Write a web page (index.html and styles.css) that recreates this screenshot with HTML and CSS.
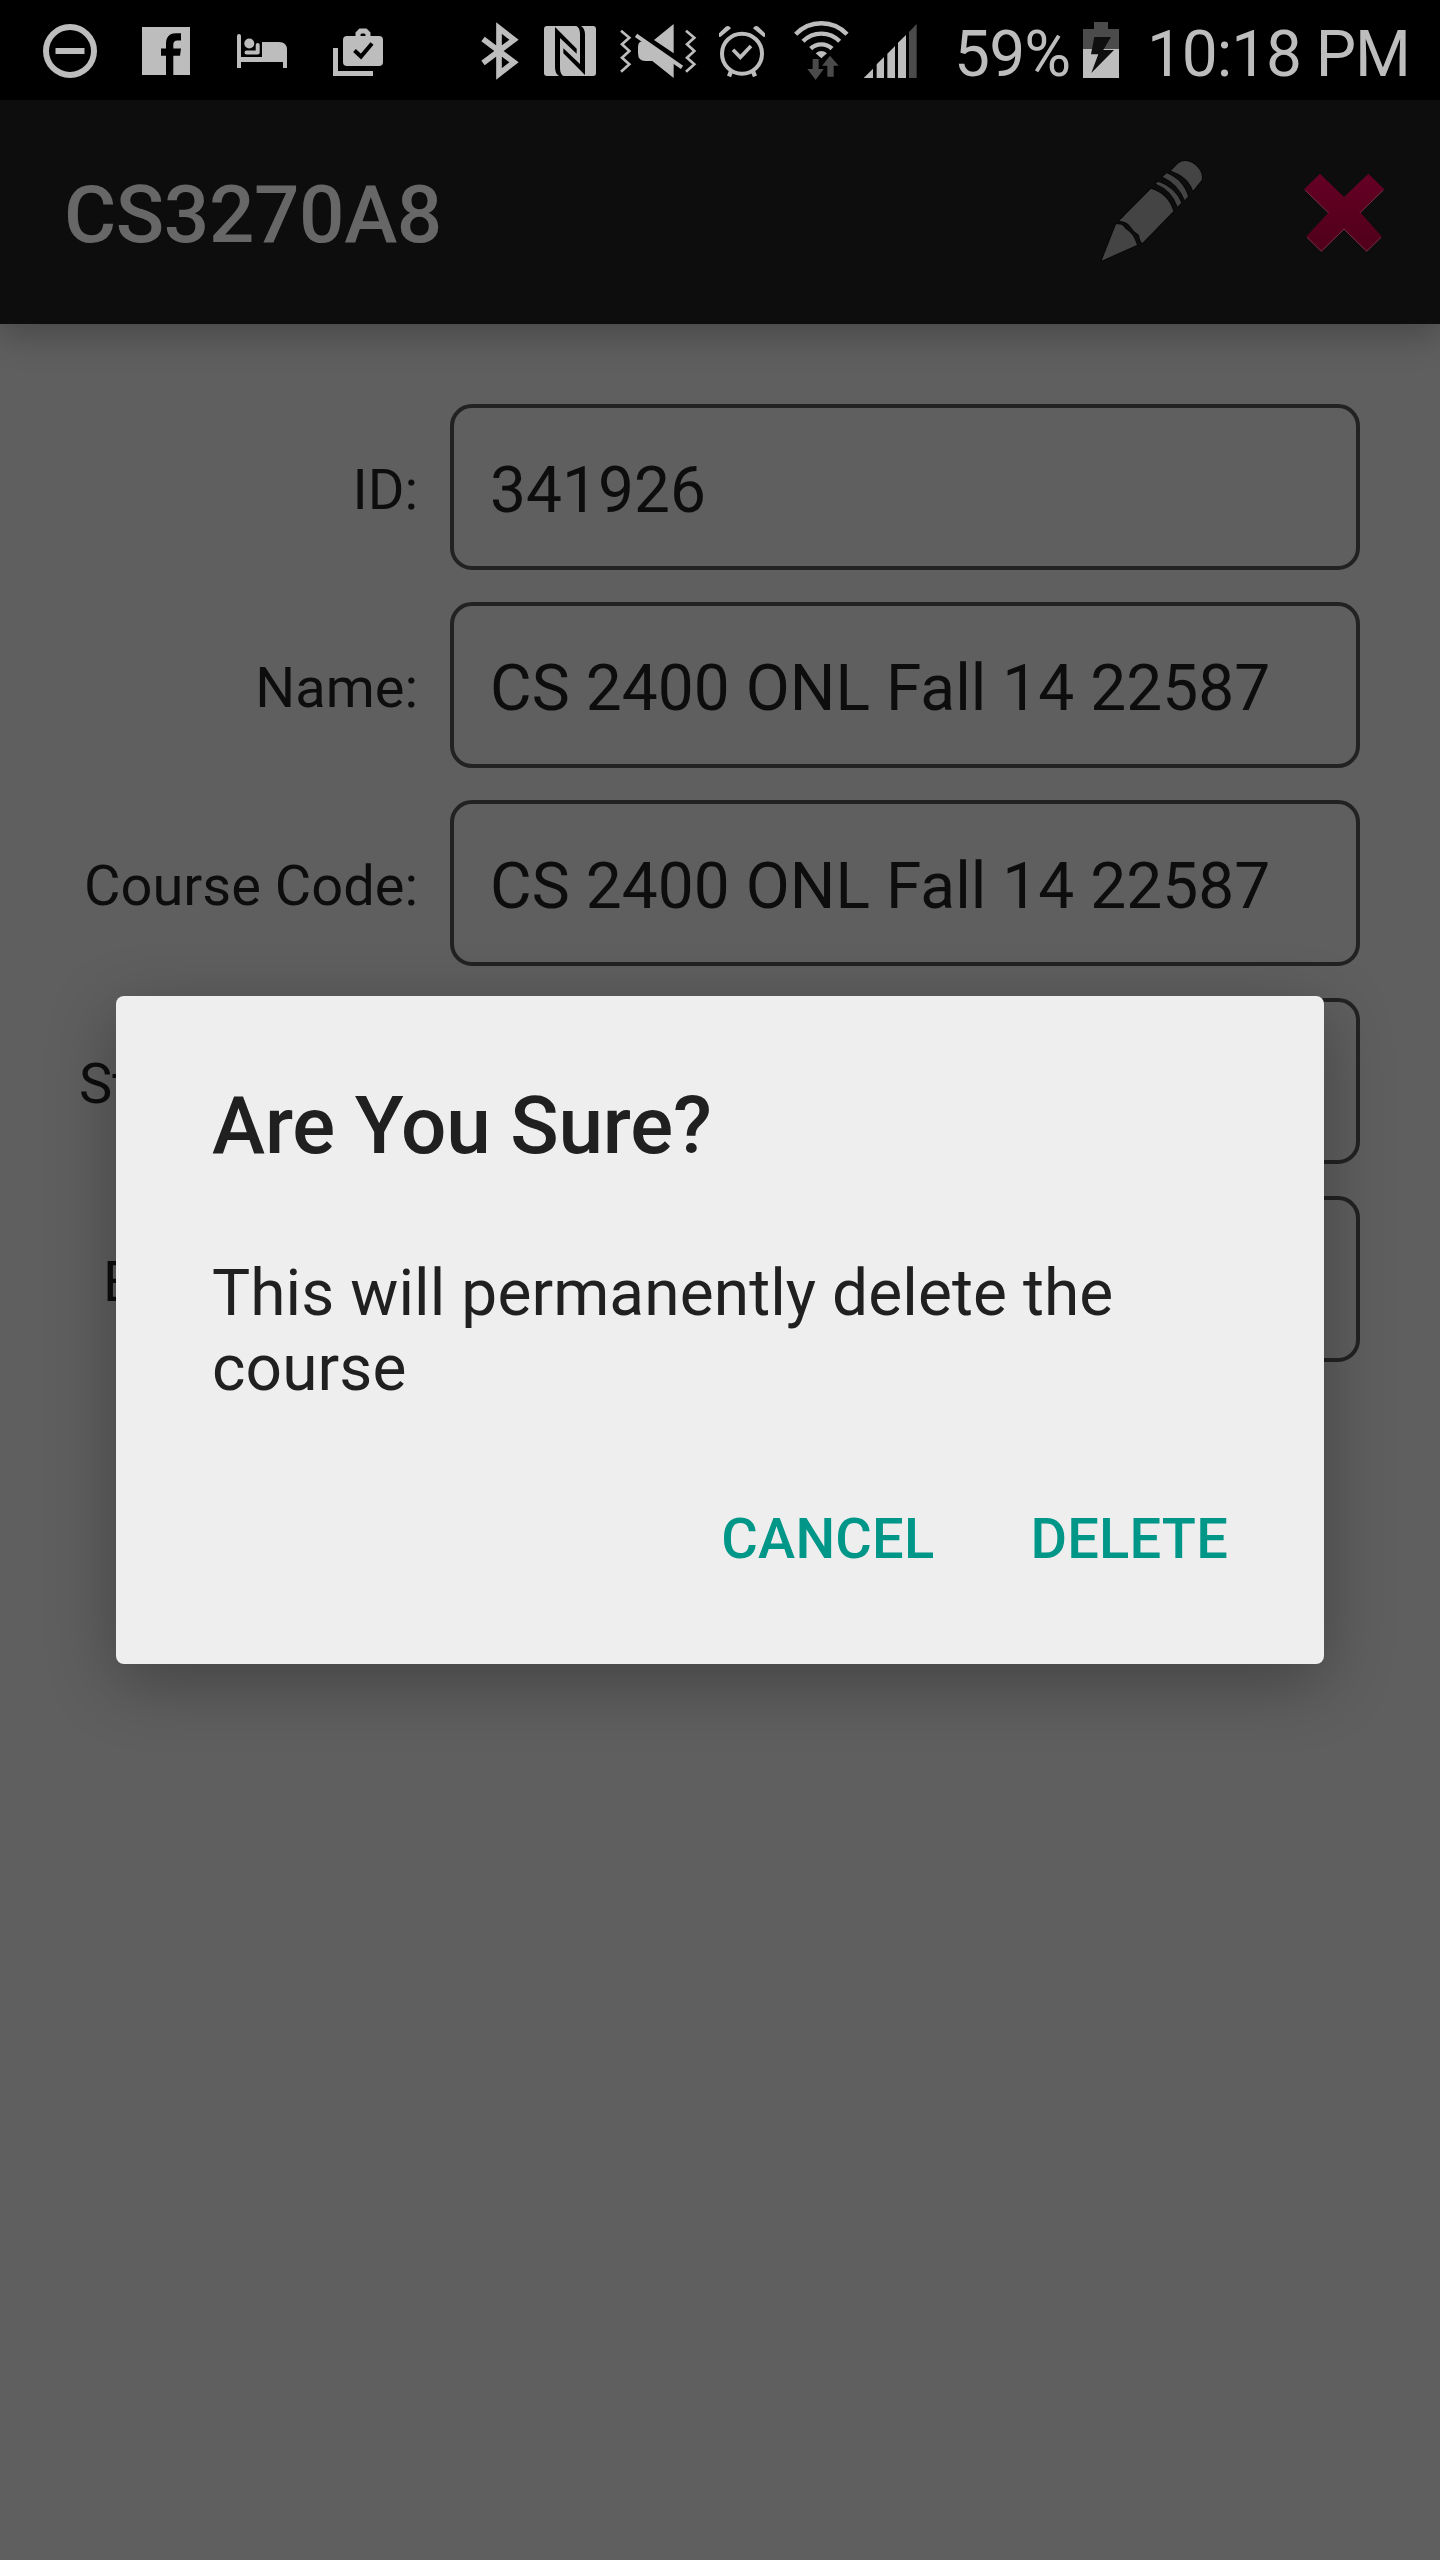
FILE: index.html
```html
<!DOCTYPE html>
<html lang="en">
<head>
<meta charset="utf-8">
<title>CS3270A8</title>
<link rel="stylesheet" href="styles.css">
</head>
<body>
<div class="screen">
  <header class="status">
    <div class="notifications">
      <svg width="120" height="100" viewBox="0 0 120 100"><circle cx="70" cy="51" r="24" fill="none" stroke="#bdbdbd" stroke-width="6"/><path d="M55.500 48h29v6h-29z"/></svg>
      <svg width="100" height="100" viewBox="120 0 100 100"><path d="M142 27h48v48h-16.700V55.700H180L181 48.500H173.300V45C173.300 42 174.500 40.500 177.500 40.500H181V33.300H175.500C169 33.300 166 37.500 166 44V48.500H161V55.700H166V75H142z"/></svg>
      <svg width="100" height="100" viewBox="220 0 100 100"><path d="M237 68V36q0-2 2-2t2 2V57H262V42H279Q287 42 287 50V68H283V62H241V68z"/><circle cx="249.300" cy="43.500" r="5"/><path d="M246.500 52.500H257.700V45" fill="none" stroke="#bdbdbd" stroke-width="4" stroke-linecap="round" stroke-linejoin="round"/></svg>
      <svg width="100" height="100" viewBox="320 0 100 100"><rect x="343" y="36" width="40" height="30" rx="4"/><path d="M358 37v-3.500l2.500-2.500h5l2.500 2.500V37M335.500 48V73.500H373" fill="none" stroke="#bdbdbd" stroke-width="5"/><path d="M354.500 50.500l6.500 6L372 43.500" fill="none" stroke="#000" stroke-width="4"/></svg>
    </div>
    <div class="system">
      <svg width="72" height="100" viewBox="0 0 216 300"><path d="M69 117L162 187 117 222V84L162 119 69 189" fill="none" stroke="#bdbdbd" stroke-width="17"/></svg>
      <svg width="76" height="100" viewBox="216 0 228 300"><g transform="translate(228 54)"><rect x="24" y="24" width="156" height="150" rx="9"/><path fill="#000" d="M57 27L122 92V107L72 60V150Q72 170 84 175H70Q57 168 57 148zM147 171L82 106V91L132 138V48Q132 28 120 23H134Q147 30 147 50z"/></g></svg>
      <svg width="100" height="100" viewBox="444 0 300 300"><path d="M641 72V160L582 120zM534 142Q534 122 550 124L568 138 641 188V234L577 183H556Q534 183 534 160z"/><path d="M528 106L666 202" stroke="#bdbdbd" stroke-width="12"/><path d="M483 92l25 21-22 20 22 20-22 20 22 20-25 22M678 92l25 21-22 20 22 20-22 20 22 20-25 22" fill="none" stroke="#bdbdbd" stroke-width="8"/></svg>
      <svg width="72" height="100" viewBox="744 0 216 300"><g fill="none" stroke="#bdbdbd"><circle cx="846" cy="161" r="60" stroke-width="12"/><path stroke-width="11" d="M819 149L841 172 873 138"/><path stroke-width="13" d="M814 212l-7 17M878 212l7 17"/></g><path d="M777 111V100L797 80Q807 75 813 85L782 110zM915 111V100L895 80Q885 75 879 85L910 110z"/></svg>
      <svg width="76" height="100" viewBox="960 0 228 300"><g fill="none" stroke="#bdbdbd" stroke-width="13"><path d="M1007 103A106 106 0 0 1 1161 103M1029 124A77 77 0 0 1 1139 124M1052 146A46 46 0 0 1 1116 146"/></g><path d="M1067 160Q1084 146 1101 160L1084 175z"/><path fill="#4b4b4b" d="M1058 177h18v30h15l-24 33-25-33h16zM1110 167l26 30h-15v33h-19v-33h-16z"/></svg>
      <svg width="64" height="100" viewBox="1188 0 192 300"><path d="M1211 234l28-28v28zM1250 193l22-22v63h-22zM1282 161l23-23v96h-23zM1314 128l24-23v129h-24z"/><path fill="#4b4b4b" d="M1347 96l23-24v162h-23z"/></svg>
      <span class="percent">59%</span>
      <svg width="44" height="100" viewBox="1079 0 44 100"><path fill="#4b4b4b" d="M1094 22h14v7h11v20h-36V29h11z"/><path d="M1083 49h36v29h-36z"/><path fill="#0f0f0f" d="M1094.300 37h16.700l-7.700 13h10.700L1091.300 73l7-18.700H1091z"/></svg>
      <span class="clock">10:18 PM</span>
    </div>
  </header>

  <div class="appbar">
    <h1>CS3270A8</h1>
    <div class="actions">
      <svg width="120" height="120" viewBox="0 0 360 360"><path fill="#444" stroke="#070707" stroke-width="5" paint-order="stroke" stroke-linejoin="round" d="M35 332L78 223Q98 220 106 236 130 248 141 285zM88 212L183 116Q235 132 250 184L157 279Q150 275 147 255 130 245 120 228 112 215 88 212zM197 101L205 95Q255 112 274 158L263 170Q245 120 197 101zM218 80L230 70Q280 90 294 140L284 150Q265 102 218 80zM243 62L265 40Q287 24 315 44 340 65 335 90L309 122Q295 80 243 62z"/></svg>
      <svg width="120" height="120" viewBox="672 60 360 360"><defs><linearGradient id="red" x1="0" y1="0" x2="0" y2="1"><stop offset="0" stop-color="#650024"/><stop offset="1" stop-color="#50001a"/></linearGradient></defs><path fill="url(#red)" stroke="url(#red)" stroke-width="4" stroke-linejoin="round" d="M780 134L852 204 925 134 970 178 899 248 963 320 920 362 852 296 784 362 741 320 808 248 735 178z"/><path d="M735 180L806 249M970 180L899 249M741 322L784 364 852 297 920 364 963 322" fill="none" stroke="#74304a" stroke-width="3"/></svg>
    </div>
  </div>

  <main class="form">
    <label>ID:</label><div class="field">341926</div>
    <label>Name:</label><div class="field">CS 2400 ONL Fall 14 22587</div>
    <label>Course Code:</label><div class="field">CS 2400 ONL Fall 14 22587</div>
    <label class="covered start">St</label><div class="field"></div>
    <label class="covered end">E</label><div class="field"></div>
  </main>

  <section class="dialog" role="dialog">
    <h2>Are You Sure?</h2>
    <p>This will permanently delete the course</p>
    <div class="buttons"><button>CANCEL</button><button>DELETE</button></div>
  </section>
</div>
</body>
</html>
```

FILE: styles.css
```css
* { box-sizing: border-box; }
body { margin: 0; font-family: Roboto, "Noto Sans", sans-serif; background: #5f5f5f; }
h1, h2, p { margin: 0; }
svg { display: block; flex: none; fill: #bdbdbd; }

.screen {
  position: relative;
  width: 1440px;
  height: 2560px;
  overflow: hidden;
  background: #5f5f5f;
  color: #0d0d0d;
}

/* System status bar */
.status {
  display: flex;
  justify-content: space-between;
  height: 100px;
  background: #000;
  color: #bdbdbd;
  font-size: 64px;
  line-height: 109px;
}
.notifications, .system { display: flex; }
.system { width: 980px; white-space: nowrap; }
.percent { width: 159px; padding-left: 34px; letter-spacing: -0.8px; }
.clock { padding-left: 24px; letter-spacing: -1.1px; }

/* App bar */
.appbar {
  position: relative;
  display: flex;
  align-items: center;
  justify-content: space-between;
  height: 224px;
  padding: 0 36px 0 64px;
  background: #0d0d0d;
  box-shadow: 0 12px 32px rgba(0, 0, 0, .24);
}
h1 { padding-top: 6px; font-size: 80px; font-weight: 500; line-height: 94px; letter-spacing: -0.4px; color: #676767; }
.actions { display: flex; gap: 74px; padding-bottom: 4px; }

/* Course form */
.form {
  display: grid;
  grid-template-columns: 418px 910px;
  grid-auto-rows: 166px;
  gap: 32px;
  padding-top: 80px;
}
.form label { padding-top: 6px; font-size: 56px; line-height: 160px; text-align: right; white-space: nowrap; }
.form .covered { text-align: left; }
.form .start { padding-left: 79px; }
.form .end { padding-left: 103px; }
.field {
  padding: 3px 36px 0;
  border: 4px solid #222;
  border-radius: 22px;
  font-size: 64px;
  line-height: 160px;
  letter-spacing: 0.05px;
  white-space: nowrap;
}

/* Confirmation dialog over the form */
.dialog {
  position: absolute;
  left: 116px;
  top: 996px;
  width: 1208px;
  height: 668px;
  padding: 83px 96px 0;
  border-radius: 8px;
  background: #eee;
  color: #202020;
  box-shadow: 0 18px 68px rgba(0, 0, 0, .3);
}
h2 { font-size: 80px; font-weight: 500; line-height: 94px; letter-spacing: -0.15px; }
.dialog p { margin-top: 83px; font-size: 64px; line-height: 75px; letter-spacing: 0.08px; }
.buttons { display: flex; justify-content: flex-end; gap: 96px; margin-top: 100px; }
.buttons button {
  padding: 0;
  border: 0;
  background: none;
  color: #009688;
  font: 500 56px/66px Roboto, "Noto Sans", sans-serif;
  letter-spacing: 0.2px;
}
```
